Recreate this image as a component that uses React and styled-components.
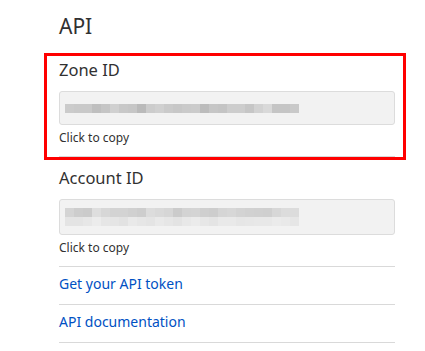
import React from 'react';
import styled, { createGlobalStyle } from 'styled-components';

const zoneBlur = [
  ['#cbcbcb', '#c9c9c9', '#c9c9c9', '#bfbfbf', '#c5c5c5', '#d0d0d0', '#c8c8c8', '#c6c6c6', '#bababa', '#cccccc', '#d0d0d0', '#cacaca', '#c7c7c7',
   '#cacaca', '#cbcbcb', '#bcbcbc', '#c6c6c6', '#c4c4c4', '#cdcdcd', '#cdcdcd', '#c6c6c6', '#d2d2d2', '#d9d9d9', '#c5c5c5', '#c5c5c5', '#c9c9c9'],
];

const accountBlur = [
  ['#d4d4d4', '#cdcdcd', '#cbcbcb', '#dedede', '#d7d7d7', '#d3d3d3', '#d3d3d3', '#d0d0d0', '#cdcdcd', '#dcdcdc', '#d9d9d9', '#d6d6d6', '#cbcbcb', '#d3d3d3',
   '#d4d4d4', '#cfcfcf', '#cdcdcd', '#d5d5d5', '#d7d7d7', '#d3d3d3', '#d1d1d1', '#d0d0d0', '#cfcfcf', '#d7d7d7', '#dcdcdc', '#dcdcdc'],
  ['#e4e4e4', '#e4e4e4', '#e7e7e7', '#ececec', '#e6e6e6', '#e5e5e5', '#e2e2e2', '#e9e9e9', '#e6e6e6', '#e4e4e4', '#e9e9e9', '#e6e6e6', '#e3e3e3', '#e8e8e8',
   '#ebebeb', '#e7e7e7', '#e4e4e4', '#e9e9e9', '#e9e9e9', '#e6e6e6', '#e7e7e7', '#e8e8e8', '#e8e8e8', '#ebebeb', '#e9e9e9', '#e6e6e6'],
];

//Component
function BlurredValue({ rows }) {
  return (
    <BlurWrap>
      {rows.map((row, i) => (
        <BlurRow key={i}>
          {row.map((c, j) => (
            <BlurCell key={j} style={{ background: c }} />
          ))}
        </BlurRow>
      ))}
    </BlurWrap>
  );
}

function IdField({ label, rows, highlighted }) {
  return (
    <Section>
      {highlighted && <Highlight />}
      <Label>{label}</Label>
      <CopyBox $tall={rows.length > 1}>
        <BlurredValue rows={rows} />
      </CopyBox>
      <Hint>Click to copy</Hint>
    </Section>
  );
}

export default function App() {
  return (
    <>
      <GlobalStyle />
      <Panel>
        <Title>API</Title>
        <IdField label="Zone ID" rows={zoneBlur} highlighted />
        <IdField label="Account ID" rows={accountBlur} />
        <LinkRow>
          <a href="#token">Get your API token</a>
        </LinkRow>
        <LinkRow>
          <a href="#docs">API documentation</a>
        </LinkRow>
      </Panel>
    </>
  );
}

//Styling Of Component

const GlobalStyle = createGlobalStyle`
  body {
    margin: 0;
    background: #fff;
    font-family: "Noto Sans", "Open Sans", sans-serif;
    color: #313131;
  }
`;

const Panel = styled.div`
  box-sizing: border-box;
  width: 425px;
  padding: 14px 30px 0 59px;
`;

const Title = styled.h2`
  margin: 0 0 10px;
  font-size: 21px;
  font-weight: 400;
  line-height: 25px;
`;

const Section = styled.div`
  position: relative;
  padding: 10px 0;
  border-bottom: 1px solid #d9d9d9;
`;

const Highlight = styled.div`
  position: absolute;
  top: 4px;
  left: -15px;
  right: -11px;
  bottom: -4px;
  border: 3px solid #ff0000;
  pointer-events: none;
`;

const Label = styled.div`
  font-size: 16.5px;
  line-height: 22px;
  margin-bottom: 10px;
`;

const CopyBox = styled.div`
  box-sizing: border-box;
  display: flex;
  align-items: center;
  height: ${(p) => (p.$tall ? '36px' : '34px')};
  padding: 0 5px;
  background: #f2f2f2;
  border: 1px solid #dcdcdc;
  border-radius: 3px;
`;

const BlurWrap = styled.div`
  display: flex;
  flex-direction: column;
`;

const BlurRow = styled.div`
  display: flex;
`;

const BlurCell = styled.span`
  width: 9px;
  height: 9px;
`;

const Hint = styled.div`
  margin-top: 5px;
  font-size: 12px;
  line-height: 16px;
`;

const LinkRow = styled.div`
  padding: 7px 0 10px;
  border-bottom: 1px solid #d9d9d9;
  font-size: 14px;
  line-height: 20px;

  a {
    color: #0051c3;
    text-decoration: none;
  }
`;
